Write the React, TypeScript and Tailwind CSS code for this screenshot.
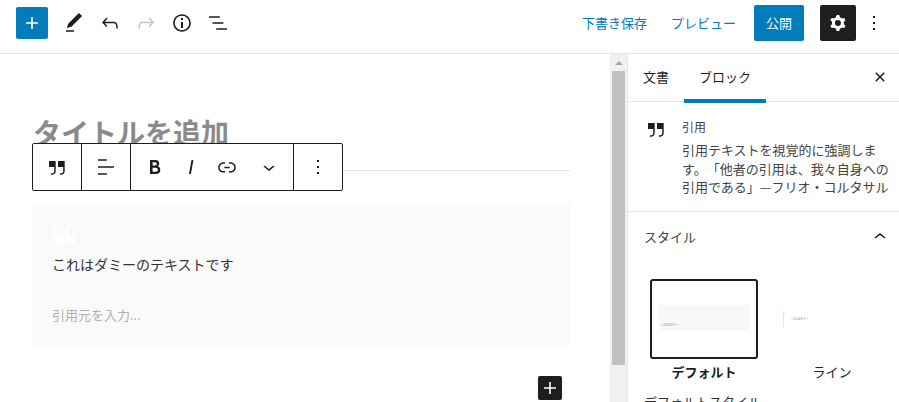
import React from 'react';

const Icon: React.FC<{ d: string; size?: number; className?: string }> = ({ d, size = 24, className = '' }) => (
  <svg viewBox="0 0 24 24" width={size} height={size} fill="currentColor" fillRule="evenodd" className={className}>
    <path d={d} />
  </svg>
);

const paths = {
  plus: 'M18 11.2h-5.2V6h-1.6v5.2H6v1.6h5.2V18h1.6v-5.2H18z',
  edit: 'M20.1 5.1L16.9 2 6.2 12.7l-1.3 4.4 4.5-1.3L20.1 5.1zM4 20.8h8v-1.5H4v1.5z',
  undo: 'M18.3 11.7c-.6-.6-1.4-.9-2.3-.9H6.7l2.9-3.3-1.1-1-4.5 5L8.5 16l1-1-2.7-2.7H16c.5 0 .9.2 1.3.5 1 1 1 3.4 1 4.5v.3h1.5v-.2c0-1.5 0-4.3-1.5-5.7z',
  redo: 'M15.6 6.5l-1.1 1 2.9 3.3H8c-.9 0-1.7.3-2.3.9-1.4 1.5-1.4 4.2-1.4 5.6v.2h1.5v-.3c0-1.1 0-3.5 1-4.5.3-.3.7-.5 1.3-.5h9.2L14.5 15l1.1 1.1 4.6-4.6-4.6-5z',
  info: 'M12 3.2c-4.8 0-8.8 3.9-8.8 8.8 0 4.8 3.9 8.8 8.8 8.8 4.8 0 8.8-3.9 8.8-8.8 0-4.8-4-8.8-8.8-8.8zm0 16c-4 0-7.2-3.3-7.2-7.2C4.8 8 8 4.8 12 4.8s7.2 3.3 7.2 7.2c0 4-3.2 7.2-7.2 7.2zM11 17h2v-6h-2v6zm0-8h2V7h-2v2z',
  list: 'M13.8 5.2H3v1.5h10.8V5.2zm-3.6 12v1.5H21v-1.5H10.2zm7.2-6H6.6v1.5h10.8v-1.5z',
  cog: 'M10.289 4.836A1 1 0 0111.275 4h1.306a1 1 0 01.987.836l.244 1.466c.787.26 1.503.679 2.108 1.218l1.393-.522a1 1 0 011.216.437l.653 1.13a1 1 0 01-.23 1.273l-1.148.944a6.025 6.025 0 010 2.435l1.149.946a1 1 0 01.23 1.272l-.653 1.13a1 1 0 01-1.216.437l-1.394-.522c-.605.54-1.32.958-2.108 1.218l-.244 1.466a1 1 0 01-.987.836h-1.306a1 1 0 01-.986-.836l-.244-1.466a5.995 5.995 0 01-2.108-1.218l-1.394.522a1 1 0 01-1.217-.436l-.653-1.131a1 1 0 01.23-1.272l1.149-.946a6.026 6.026 0 010-2.435l-1.148-.944a1 1 0 01-.23-1.272l.653-1.131a1 1 0 011.217-.437l1.393.522a5.994 5.994 0 012.108-1.218l.244-1.466zM14.929 12a3 3 0 11-6 0 3 3 0 016 0z',
  more: 'M13 19h-2v-2h2v2zm0-6h-2v-2h2v2zm0-6h-2V5h2v2z',
  close: 'M12 13.06l3.712 3.713 1.061-1.06L13.061 12l3.712-3.712-1.06-1.06L12 10.938 8.288 7.227l-1.061 1.06L10.939 12l-3.712 3.712 1.06 1.061L12 13.061z',
  quote: 'M13 6v6h5.2v4c0 .8-.2 1.4-.5 1.7-.6.6-1.6.6-2.5.5h-.3v1.5h.5c1 0 2.3-.1 3.3-1 .6-.6 1-1.6 1-2.8V6H13zm-9 6h5.2v4c0 .8-.2 1.4-.5 1.7-.6.6-1.6.6-2.5.5h-.3v1.5h.5c1 0 2.3-.1 3.3-1 .6-.6 1-1.6 1-2.8V6H4v6z',
  align: 'M4 19.8h8.9v-1.5H4v1.5zm8.9-15.6H4v1.5h8.9V4.2zm-8.9 7v1.5h16v-1.5H4z',
  bold: 'M14.7 11.3c1-.6 1.5-1.6 1.5-3 0-2.3-1.3-3.4-4-3.4H7v14h5.8c1.4 0 2.5-.3 3.3-1 .8-.7 1.2-1.7 1.2-2.9.1-1.9-.8-3.1-2.6-3.7zm-5.1-4h2.3c.6 0 1.1.1 1.4.4.3.3.5.7.5 1.2s-.2 1-.5 1.2c-.3.3-.8.4-1.4.4H9.6V7.3zm4.6 9c-.4.3-1 .4-1.7.4H9.6v-3.9h2.9c.7 0 1.3.2 1.7.5.4.3.6.8.6 1.5s-.2 1.2-.6 1.5z',
  italic: 'M12.5 5L10 19h1.9l2.5-14z',
  link: 'M15.6 7.2H14v1.5h1.6c2 0 3.7 1.7 3.7 3.7s-1.7 3.7-3.7 3.7H14v1.5h1.6c2.8 0 5.2-2.3 5.2-5.2 0-2.9-2.3-5.2-5.2-5.2zM4.7 12.4c0-2 1.7-3.7 3.7-3.7H10V7.2H8.4c-2.9 0-5.2 2.3-5.2 5.2 0 2.9 2.3 5.2 5.2 5.2H10v-1.5H8.4c-2 0-3.7-1.7-3.7-3.7zm4.6.9h5.3v-1.5H9.3v1.5z',
  down: 'M17.5 11.6L12 16l-5.5-4.4.9-1.2L12 14l4.5-3.6 1 1.2z',
  up: 'M6.5 12.4L12 8l5.5 4.4-.9 1.2L12 10l-4.5 3.6-1-1.2z',
};

const Header = () => (
  <header className="flex h-[54px] shrink-0 items-center border-b border-[#e6e6e6] bg-white pb-[7px] pl-4 pr-[13px]">
    <button className="flex h-8 w-8 items-center justify-center rounded-[2px] bg-[#007cba] text-white">
      <Icon d={paths.plus} />
    </button>
    <div className="ml-2 flex text-[#1e1e1e]">
      <span className="flex w-9 justify-center"><Icon d={paths.edit} /></span>
      <span className="flex w-9 justify-center"><Icon d={paths.undo} /></span>
      <span className="flex w-9 justify-center text-[#c4c4c4]"><Icon d={paths.redo} /></span>
      <span className="flex w-9 justify-center"><Icon d={paths.info} /></span>
      <span className="flex w-9 justify-center"><Icon d={paths.list} /></span>
    </div>
    <div className="ml-auto flex items-center text-[13px] text-[#007cba]">
      <span>下書き保存</span>
      <span className="ml-[24px]">プレビュー</span>
      <button className="ml-[18px] h-9 w-[50px] rounded-[2px] bg-[#007cba] text-white">公開</button>
      <button className="ml-4 flex h-9 w-9 items-center justify-center rounded-[2px] bg-[#1e1e1e] text-white">
        <Icon d={paths.cog} />
      </button>
      <span className="ml-1.5 flex text-[#1e1e1e]"><Icon d={paths.more} /></span>
    </div>
  </header>
);

const BlockToolbar = () => (
  <div className="absolute left-8 top-[89px] flex h-12 w-[311px] rounded-[2px] border border-[#1e1e1e] bg-white text-[#1e1e1e]">
    <span className="flex w-[49px] items-center justify-center border-r border-[#1e1e1e]"><Icon d={paths.quote} /></span>
    <span className="flex w-[49px] items-center justify-center border-r border-[#1e1e1e]"><Icon d={paths.align} /></span>
    <div className="flex w-[163px] items-center border-r border-[#1e1e1e] pl-[6px]">
      <span className="flex w-9 justify-center"><Icon d={paths.bold} /></span>
      <span className="flex w-9 justify-center"><Icon d={paths.italic} /></span>
      <span className="flex w-9 justify-center"><Icon d={paths.link} /></span>
      <span className="ml-[6px] flex w-9 justify-center"><Icon d={paths.down} /></span>
    </div>
    <span className="flex flex-1 items-center justify-center"><Icon d={paths.more} /></span>
  </div>
);

const Editor = () => (
  <main className="relative w-[610px] shrink-0 overflow-hidden bg-white">
    <div className="ml-[33px] mr-10 mt-[59px] h-[58px] border-b border-[#e6e6e6] text-[28px] font-bold leading-[38px] text-[#8a8a8a]">
      タイトルを追加
    </div>
    <BlockToolbar />
    <blockquote className="relative ml-8 mr-10 mt-8 h-[144px] bg-[#fafafa] px-5 pt-[49px]">
      <Icon d={paths.quote} size={34} className="absolute left-[15px] top-[15px] rotate-180 text-white" />
      <p className="text-[14px] leading-[24px] text-[#333]">これはダミーのテキストです</p>
      <p className="mt-[27px] text-[13px] leading-[24px] text-[#b0b0b0]">引用元を入力...</p>
    </blockquote>
    <button className="absolute left-[538px] top-[322px] flex h-6 w-6 items-center justify-center rounded-[2px] bg-[#1e1e1e] text-white">
      <Icon d={paths.plus} />
    </button>
  </main>
);

const Scrollbar = () => (
  <div className="flex w-[17px] shrink-0 flex-col bg-[#f1f1f1]">
    <div className="flex h-[17px] items-center justify-center">
      <span className="h-0 w-0 border-x-[4px] border-b-[4px] border-x-transparent border-b-[#a3a3a3]" />
    </div>
    <div className="mx-auto h-[294px] w-[13px] bg-[#c1c1c1]" />
  </div>
);

const StylePreview: React.FC<{ label: string; active?: boolean }> = ({ label, active }) => (
  <div className="flex w-[108px] flex-col items-center">
    {active ? (
      <div className="flex h-[80px] w-[108px] flex-col justify-center rounded-[3px] border-2 border-[#1e1e1e] bg-white px-[6px] pb-[2px]">
        <div className="flex h-[26px] items-end bg-[#f8f8f8] px-[3px] pb-[4px] text-[3px] leading-[4px] text-[#777]">
          これはダミー
        </div>
      </div>
    ) : (
      <div className="flex h-[80px] w-[108px] items-center pl-[5px]">
        <div className="flex h-4 items-center border-l border-[#e5e5e5] pl-[7px] text-[3px] text-[#777]">
          これはダミー
        </div>
      </div>
    )}
    <span className={`mt-[1px] text-[13px] leading-[24px] text-[#1e1e1e] ${active ? 'font-bold' : ''}`}>{label}</span>
  </div>
);

const Sidebar = () => (
  <aside className="flex-1 overflow-hidden border-l border-[#e6e6e6] bg-white text-[#1e1e1e]">
    <div className="flex h-12 items-center border-b border-[#e6e6e6] pl-[15px] pr-[7px] text-[13px]">
      <span className="pb-[2px]">文書</span>
      <span className="relative ml-[15px] flex h-12 w-[82px] items-center justify-center pb-[2px]">
        ブロック
        <span className="absolute inset-x-0 bottom-[-1px] h-1 bg-[#007cba]" />
      </span>
      <span className="ml-auto flex pb-[1px]"><Icon d={paths.close} /></span>
    </div>
    <div className="flex h-[110px] border-b border-[#e6e6e6] pl-4 pr-2 pt-[15px]">
      <span className="flex h-6 w-6 shrink-0 text-[#1e1e1e]"><Icon d={paths.quote} /></span>
      <div className="ml-[14px] text-[#444]">
        <p className="mt-[1px] text-[12px] leading-[18px]">引用</p>
        <p className="mt-[5px] w-[210px] text-[13px] leading-[18.5px] [text-spacing-trim:space-all]">
          引用テキストを視覚的に強調します。「他者の引用は、我々自身への引用である」—フリオ・コルタサル
        </p>
      </div>
    </div>
    <div className="flex h-[51px] items-center pb-[2px] pl-4 pr-[7px] text-[13px] text-[#444]">
      <span>スタイル</span>
      <span className="ml-auto flex text-[#1e1e1e]"><Icon d={paths.up} /></span>
    </div>
    <div className="ml-[22px] mt-[16px] flex gap-5">
      <StylePreview label="デフォルト" active />
      <StylePreview label="ライン" />
    </div>
    <p className="ml-4 mt-[9px] text-[13px] leading-[18px] text-[#333]">デフォルトスタイル</p>
  </aside>
);

export default function App() {
  return (
    <div className="flex h-[402px] w-[899px] flex-col overflow-hidden bg-white [font-family:'Noto_Sans_CJK_JP','Liberation_Sans',sans-serif]">
      <Header />
      <div className="flex min-h-0 flex-1">
        <Editor />
        <Scrollbar />
        <Sidebar />
      </div>
    </div>
  );
}
